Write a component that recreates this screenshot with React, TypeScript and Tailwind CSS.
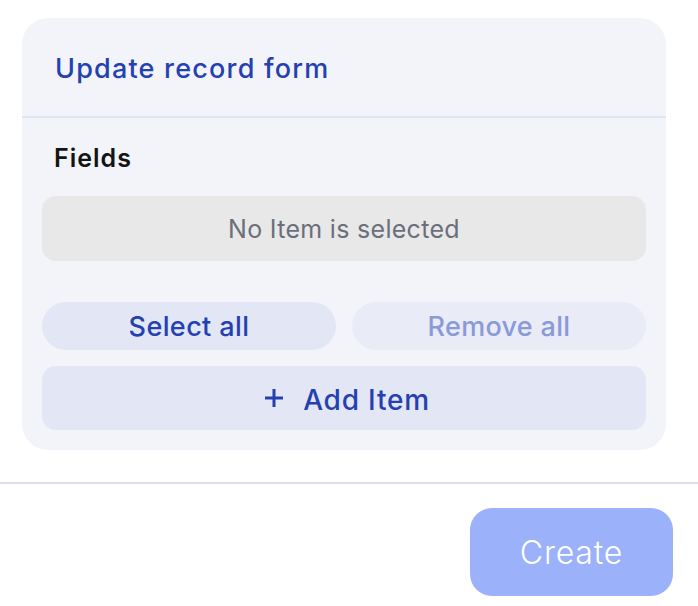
import React from "react";

export default function App() {
  return (
    <div className="w-[698px] h-[606px] bg-white overflow-hidden" style={{ fontFamily: "Inter, 'Noto Sans', sans-serif" }}>
      <div className="pt-[18px] pl-[22px] pr-[32px]">
        <div className="rounded-[26px] bg-[#f3f4fa] overflow-hidden">
          <div className="h-[100px] flex items-center pl-[33px] pt-[2px] border-b-2 border-[#dfe4f6]">
            <h1 className="text-[27px] font-medium text-[#2341b0] leading-none tracking-[1.2px]">Update record form</h1>
          </div>
          <div className="px-[20px] pt-[24px] pb-[20px] flex flex-col">
            <div className="pl-[12px] h-[32px] flex items-center text-[25px] font-semibold text-[#141414] leading-none tracking-[1px]">Fields</div>
            <div className="mt-[22px] h-[65px] pt-[3px] rounded-[14px] bg-[#e8e8e9] flex items-center justify-center text-[25px] text-[#6b6f7a] tracking-[0.3px]">
              No Item is selected
            </div>
            <div className="mt-[41px] grid grid-cols-2 gap-[16px]">
              <button className="h-[48px] pt-[3px] rounded-full bg-[#e3e6f5] text-[27px] font-medium text-[#2341b0] tracking-[0.4px]">Select all</button>
              <button className="h-[48px] pt-[3px] rounded-full bg-[#e9ebf7] text-[27px] font-medium text-[#8a99d8] tracking-[0.3px]">Remove all</button>
            </div>
            <button className="mt-[16px] h-[64px] pt-[3px] rounded-[14px] bg-[#e3e6f5] flex items-center justify-center gap-[19px] text-[28px] font-medium text-[#2341b0] tracking-[0.8px]">
              <svg width="20" height="20" viewBox="0 0 20 20" fill="none" stroke="#2341b0" strokeWidth="3" strokeLinecap="butt" className="ml-[6px] -mt-[3px]">
                <path d="M10 1v18M1 10h18" />
              </svg>
              <span>Add Item</span>
            </button>
          </div>
        </div>
      </div>
      <div className="mt-[32px] h-[2px] bg-[#dedfe9]" />
      <div className="flex justify-end pr-[25px] pt-[24px]">
        <button className="w-[203px] h-[88px] pt-[2px] rounded-[22px] bg-[#9bb1fa] text-white text-[32px] font-light tracking-[0.8px]">Create</button>
      </div>
    </div>
  );
}
